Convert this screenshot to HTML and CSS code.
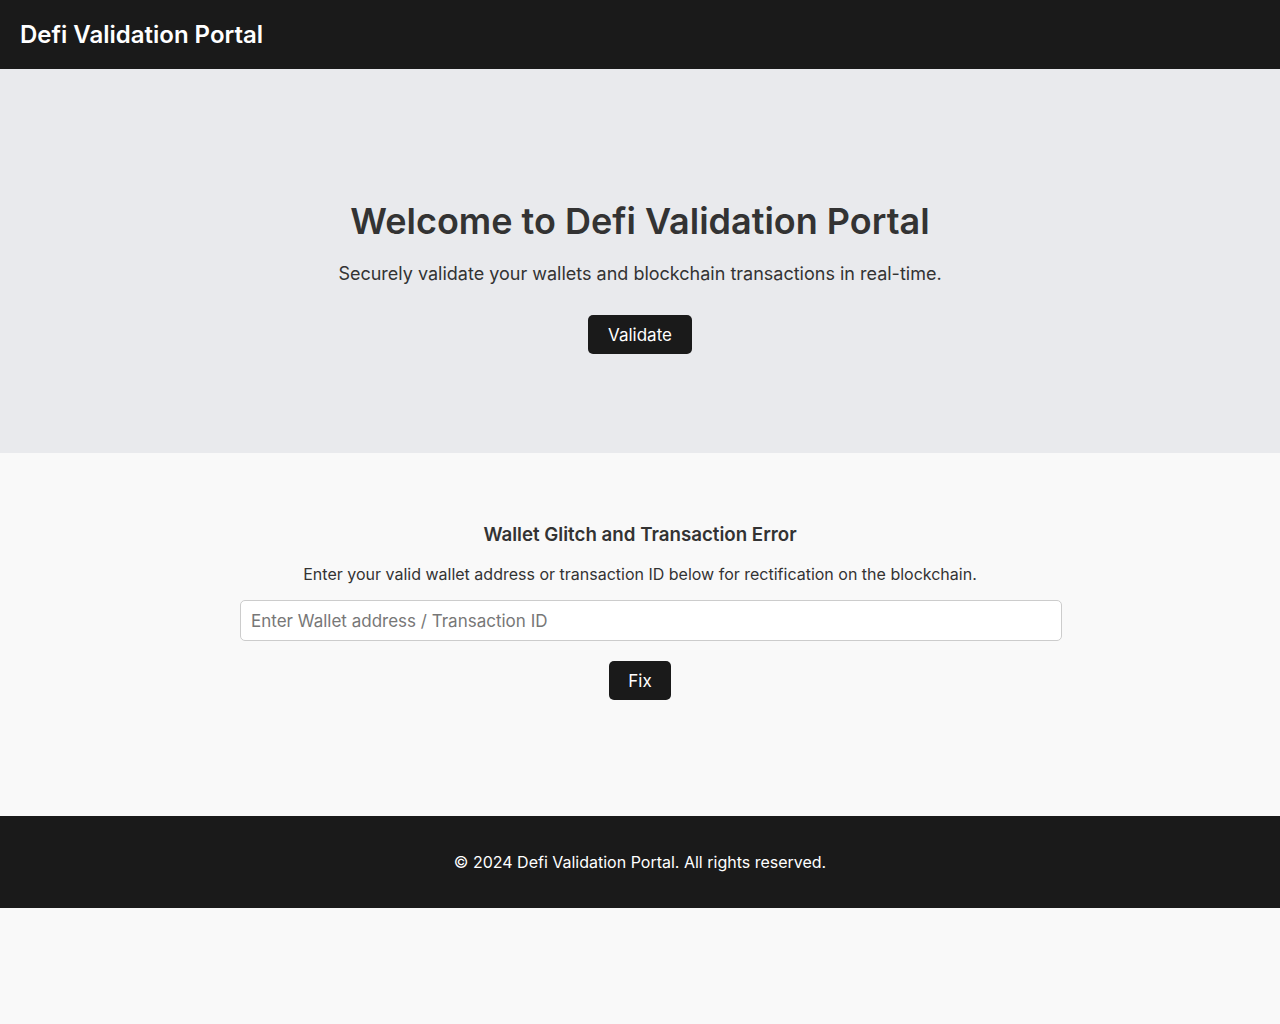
FILE: index.html
```html
<!DOCTYPE html>
<html lang="en">
<head>
<meta charset="utf-8">
<title>Defi Validation Portal</title>
<link rel="stylesheet" href="styles.css">
</head>
<body>
<header class="topbar">
  <div class="brand">Defi Validation Portal</div>
</header>
<section class="hero">
  <h1 class="hero-title">Welcome to Defi Validation Portal</h1>
  <p class="hero-sub">Securely validate your wallets and blockchain transactions in real-time.</p>
  <button class="btn btn-validate">Validate</button>
</section>
<section class="fix">
  <h2 class="fix-title">Wallet Glitch and Transaction Error</h2>
  <p class="fix-sub">Enter your valid wallet address or transaction ID below for rectification on the blockchain.</p>
  <div class="fix-form">
    <input class="fix-input" type="text" placeholder="Enter Wallet address / Transaction ID">
  </div>
  <button class="btn btn-fix">Fix</button>
</section>
<footer class="footer">
  <p class="footer-text">© 2024 Defi Validation Portal. All rights reserved.</p>
</footer>
</body>
</html>
```
FILE: styles.css
```css
* { box-sizing: border-box; }
html, body { margin: 0; padding: 0; }
body {
  font-family: Inter, "Noto Sans", sans-serif;
  background: #f9f9f9;
  color: #333333;
}
.topbar {
  height: 69px;
  background: #1a1a1a;
  display: flex;
  align-items: center;
  padding: 0 20px;
}
.brand {
  color: #ffffff;
  font-size: 24px;
  font-weight: 600;
}
.hero {
  background: #e9eaed;
  height: 384px;
  display: flex;
  flex-direction: column;
  align-items: center;
  padding-top: 130px;
}
.hero-title {
  margin: 0;
  font-size: 36px;
  font-weight: 600;
  line-height: 44px;
  color: #333333;
}
.hero-sub {
  margin: 20px 0 0;
  font-size: 18px;
  line-height: 22px;
  color: #333333;
}
.btn {
  font-family: inherit;
  background: #1a1a1a;
  color: #ffffff;
  border: none;
  border-radius: 5px;
  font-size: 17px;
  line-height: 20px;
  padding: 0;
  cursor: pointer;
}
.btn-validate {
  margin-top: 30px;
  width: 104px;
  height: 39px;
}
.fix {
  height: 363px;
  display: flex;
  flex-direction: column;
  align-items: center;
  padding-top: 71px;
}
.fix-title {
  margin: 0;
  font-size: 18.72px;
  font-weight: 600;
  line-height: 22px;
}
.fix-sub {
  margin: 18px 0 0;
  font-size: 16px;
  line-height: 20px;
}
.fix-form {
  width: 800px;
  margin-top: 16px;
}
.fix-input {
  display: block;
  box-sizing: content-box;
  width: 100%;
  height: 39px;
  padding: 0 10px;
  border: 1px solid #cccccc;
  border-radius: 5px;
  background: #ffffff;
  font-family: inherit;
  font-size: 17px;
  color: #333333;
}
.fix-input::placeholder { color: #777777; }
.btn-fix {
  margin-top: 20px;
  width: 62px;
  height: 39px;
}
.footer {
  background: #1a1a1a;
  height: 92px;
  display: flex;
  align-items: center;
  justify-content: center;
}
.footer-text {
  margin: 0;
  color: #ffffff;
  font-size: 16px;
}
```
